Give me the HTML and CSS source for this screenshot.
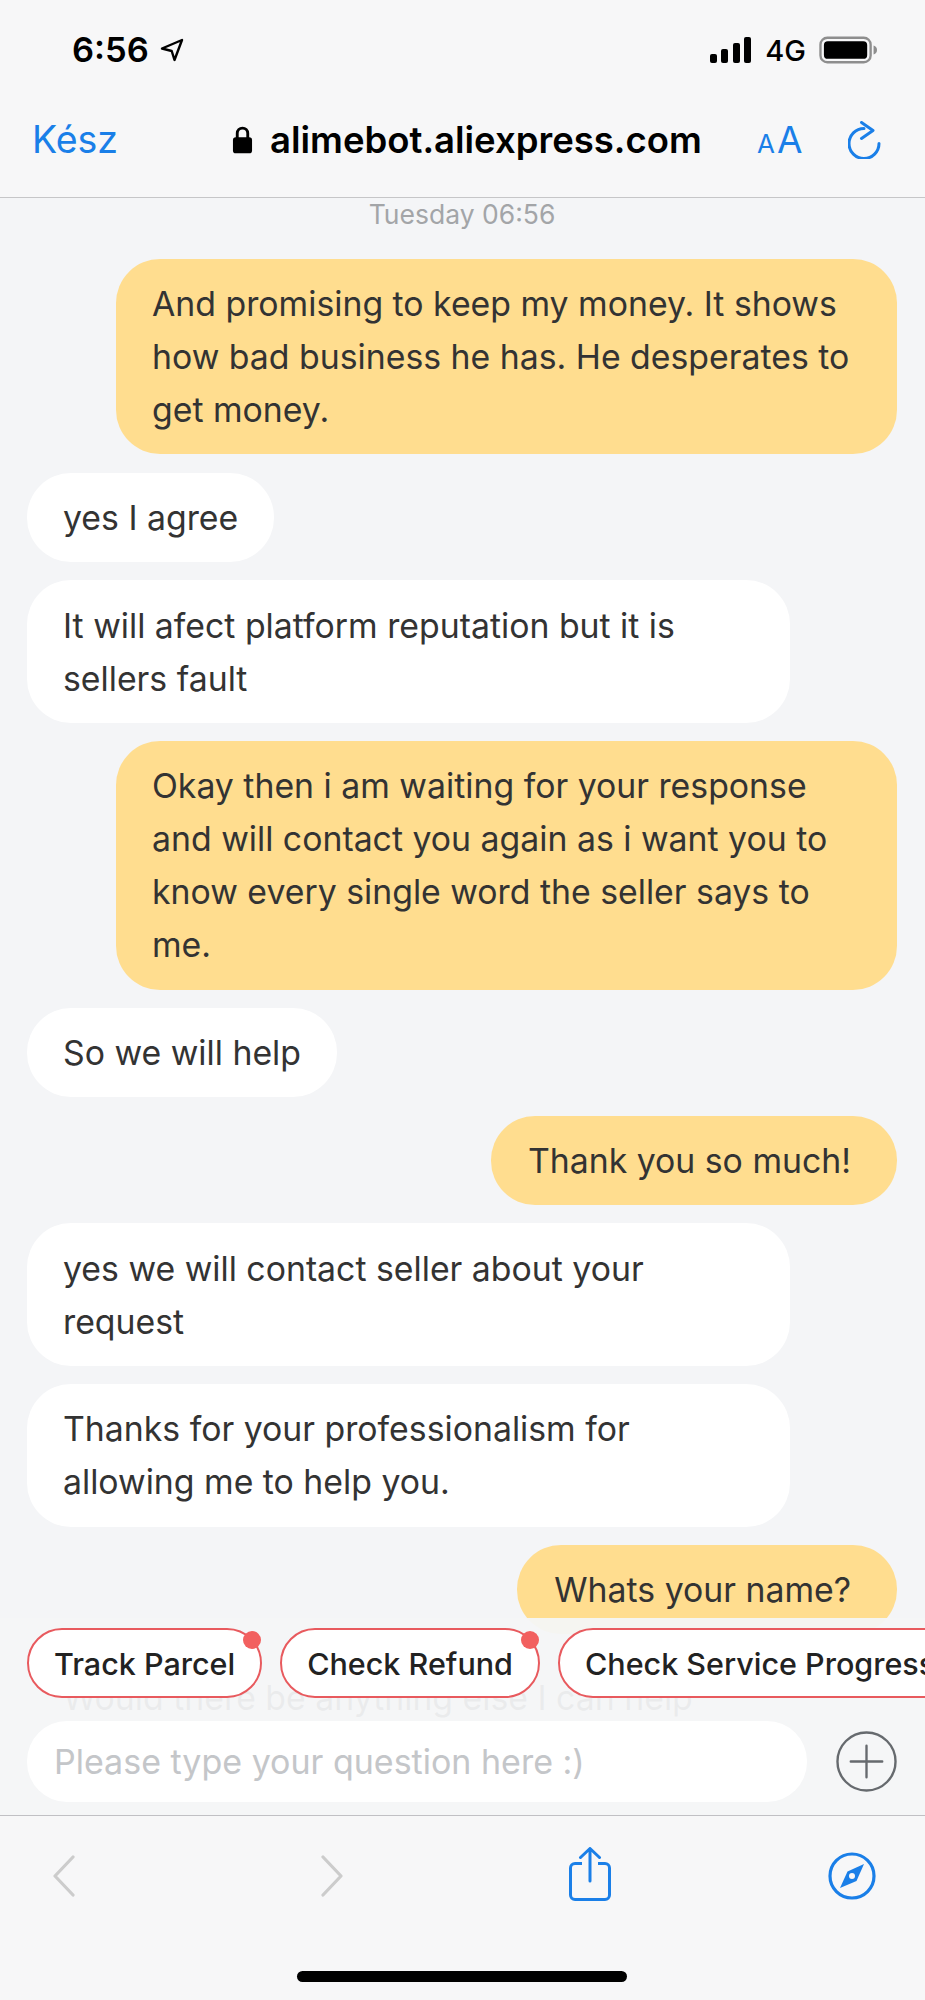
FILE: index.html
```html
<!DOCTYPE html>
<html lang="en">
<head>
    <meta charset="UTF-8">
    <meta name="viewport" content="width=device-width, initial-scale=1.0">
    <title>alimebot.aliexpress.com</title>
    <link rel="stylesheet" href="styles.css">
</head>

<body>
    <div class="phone">
        <div class="status-bar">
            <div class="status-time">
                <span>6:56</span>
                <svg class="icon-location" viewBox="0 0 24 24"><path d="M2 10.500 22 2l-7.500 20-2.800-9z" fill="none" stroke="#000" stroke-width="2.400" stroke-linejoin="round"/></svg>
            </div>
            <div class="status-right">
                <svg class="icon-signal" viewBox="0 0 42 26"><rect x="0" y="17" width="7" height="9" rx="2"/><rect x="11" y="12" width="7" height="14" rx="2"/><rect x="23" y="6" width="7" height="20" rx="2"/><rect x="34" y="0" width="7" height="26" rx="2"/></svg>
                <span class="status-net">4G</span>
                <svg class="icon-battery" viewBox="0 0 60 28"><rect x="1.500" y="1.500" width="51" height="25" rx="7" fill="none" stroke="#8e8e8e" stroke-width="2.400"/><rect x="5" y="5" width="44" height="18" rx="4"/><path d="M55.500 9.500c2.500.8 3.500 2.500 3.500 4.500s-1 3.700-3.500 4.500z" fill="#8e8e8e"/></svg>
            </div>
        </div>

        <div class="nav-bar">
            <a href="#" class="nav-done">Kész</a>
            <div class="nav-url">
                <svg class="icon-lock" viewBox="0 0 22 30"><path d="M5.500 13V8a5.500 5.500 0 0 1 11 0v5" fill="none" stroke="#000" stroke-width="3"/><rect x="1" y="12" width="20" height="17" rx="3"/></svg>
                <span>alimebot.aliexpress.com</span>
            </div>
            <div class="nav-aa"><span class="aa-small">A</span><span class="aa-big">A</span></div>
            <svg class="icon-reload" viewBox="0 0 33 38"><path d="M16 7.500A15 15 0 1 0 31 22.500" fill="none" stroke="#1a7fe8" stroke-width="3" stroke-linecap="round"/><path d="M13.500 1.500 25 9.500 13.500 17.500" fill="none" stroke="#1a7fe8" stroke-width="3" stroke-linecap="round" stroke-linejoin="round"/></svg>
        </div>

        <div class="chat-area">
            <div class="chat-scroll">
                <div class="chat-time">Tuesday 06:56</div>
                <div class="bubble me long">And promising to keep my money. It shows how bad business he has. He desperates to get money.</div>
                <div class="bubble bot">yes I agree</div>
                <div class="bubble bot wide">It will afect platform reputation but it is sellers fault</div>
                <div class="bubble me long">Okay then i am waiting for your response and will contact you again as i want you to know every single word the seller says to me.</div>
                <div class="bubble bot">So we will help</div>
                <div class="bubble me">Thank you so much!</div>
                <div class="bubble bot wide">yes we will contact seller about your request</div>
                <div class="bubble bot wide">Thanks for your professionalism for allowing me to help you.</div>
                <div class="bubble me">Whats your name?</div>
                <div class="bubble bot wide">Would there be anything else I can help</div>
            </div>

            <div class="chat-footer">
                <div class="chips">
                    <div class="chip dot">Track Parcel</div>
                    <div class="chip dot">Check Refund</div>
                    <div class="chip">Check Service Progress</div>
                </div>
                <div class="input-row">
                    <div class="chat-input">Please type your question here :)</div>
                    <svg class="icon-plus" viewBox="0 0 62 62"><circle cx="31" cy="31" r="29.500" fill="none" stroke="#666a6e" stroke-width="2.400"/><path d="M31 15v32M15 31h32" stroke="#666a6e" stroke-width="2.400" stroke-linecap="round"/></svg>
                </div>
            </div>
        </div>

        <div class="tool-bar">
            <div class="tool-row">
                <svg class="tool-arrow" viewBox="0 0 24 42"><path d="M21 2 3 21l18 19" fill="none" stroke="#cccccc" stroke-width="3.200" stroke-linecap="round" stroke-linejoin="round"/></svg>
                <svg class="tool-arrow" viewBox="0 0 24 42"><path d="m3 2 18 19L3 40" fill="none" stroke="#cccccc" stroke-width="3.200" stroke-linecap="round" stroke-linejoin="round"/></svg>
                <svg class="tool-share" viewBox="0 0 42 54"><path d="M13 16.500H6A4.500 4.500 0 0 0 1.500 21v27A4.500 4.500 0 0 0 6 52.500h30a4.500 4.500 0 0 0 4.500-4.500V21A4.500 4.500 0 0 0 36 16.500h-7" fill="none" stroke="#1a7fe8" stroke-width="3"/><path d="M21 34V2M11.500 10.500 21 1.500l9.500 9" fill="none" stroke="#1a7fe8" stroke-width="3" stroke-linecap="round" stroke-linejoin="round"/></svg>
                <svg class="tool-compass" viewBox="0 0 48 48"><circle cx="24" cy="24" r="22" fill="none" stroke="#1a7fe8" stroke-width="3.200"/><path d="M36 12 28.500 29 12 36 19.500 19.500z" fill="#1a7fe8"/><circle cx="24" cy="24" r="3" fill="#f7f7f8"/></svg>
            </div>
            <div class="home-bar"></div>
        </div>
    </div>
</body>
</html>
```

FILE: styles.css
```css
html, body {
    margin: 0;
    padding: 0;
}
body {
    font-family: Inter, "Liberation Sans", Arial, sans-serif;
    background-color: #f7f7f8;
    color: #000;
}
svg {
    display: block;
    flex: none;
}
.phone {
    width: 925px;
    height: 2000px;
    display: flex;
    flex-direction: column;
    overflow: hidden;
}

/* status bar */
.status-bar {
    height: 76px;
    padding: 28px 47px 0 72px;
    box-sizing: border-box;
    display: flex;
    justify-content: space-between;
    align-items: flex-start;
    flex: none;
}
.status-time {
    display: flex;
    align-items: center;
    gap: 11px;
    font-size: 34.500px;
    font-weight: 600;
    line-height: 44px;
}
.icon-location {
    width: 24px;
    height: 24px;
}
.status-right {
    display: flex;
    align-items: center;
    gap: 13px;
    height: 44px;
}
.icon-signal {
    width: 42px;
    height: 26px;
}
.status-net {
    font-size: 29px;
    font-weight: 500;
}
.icon-battery {
    width: 59px;
    height: 28px;
}

/* address bar */
.nav-bar {
    height: 122px;
    padding: 6px 44px 0 32px;
    box-sizing: border-box;
    display: flex;
    align-items: center;
    border-bottom: 1px solid #c6c6c8;
    flex: none;
}
.nav-done {
    font-size: 37.500px;
    color: #1a7fe8;
    text-decoration: none;
    width: 200px;
}
.nav-url {
    display: flex;
    align-items: center;
    gap: 17px;
    font-size: 36.500px;
    font-weight: 600;
    width: 525px;
    white-space: nowrap;
}
.icon-lock {
    width: 21px;
    height: 30px;
}
.nav-aa {
    color: #1a7fe8;
    display: flex;
    align-items: baseline;
    gap: 2px;
    width: 91px;
}
.aa-small {
    font-size: 26px;
}
.aa-big {
    font-size: 37px;
}
.icon-reload {
    width: 33px;
    height: 38px;
}

/* chat */
.chat-area {
    position: relative;
    flex: 1;
    background-color: #f4f5f7;
    overflow: hidden;
}
.chat-scroll {
    display: flex;
    flex-direction: column;
    gap: 18.250px;
    padding: 0 28px 0 27px;
}
.chat-time {
    font-size: 26.500px;
    line-height: 32px;
    color: #a3a5a8;
    text-align: center;
    margin-bottom: 10.500px;
}
.bubble {
    font-size: 33.800px;
    line-height: 53px;
    color: #333;
    padding: 18.250px 36px;
    border-radius: 44px;
    box-sizing: border-box;
    width: fit-content;
}
.bubble.me {
    background-color: #ffdd8f;
    align-self: flex-end;
    padding-left: 37px;
    padding-right: 46px;
}
.bubble.me.long {
    width: 781px;
    padding-left: 36px;
    padding-right: 36px;
}
.bubble.bot {
    background-color: #fff;
    align-self: flex-start;
    max-width: 763px;
}
.bubble.wide {
    width: 763px;
}

/* chips and input, lies over the end of the chat */
.chat-footer {
    position: absolute;
    left: 0;
    right: 0;
    bottom: 0;
    height: 197px;
    background-color: rgba(244, 245, 247, 0.95);
    padding: 10px 0 0 27px;
    box-sizing: border-box;
    overflow: hidden;
}
.chips {
    display: flex;
    gap: 18px;
    width: 1200px;
}
.chip {
    position: relative;
    height: 70px;
    padding: 0 25px;
    display: flex;
    align-items: center;
    font-size: 30.500px;
    font-weight: 500;
    color: #222;
    background-color: #fff;
    border: 2.500px solid #e85a5e;
    border-radius: 35px;
    box-sizing: border-box;
    white-space: nowrap;
}
.chip.dot::after {
    content: "";
    position: absolute;
    top: 1px;
    right: -1px;
    width: 18px;
    height: 18px;
    border-radius: 50%;
    background-color: #f2605f;
}
.input-row {
    display: flex;
    align-items: center;
    margin-top: 23px;
}
.chat-input {
    width: 780px;
    height: 81px;
    line-height: 81px;
    padding-left: 27px;
    box-sizing: border-box;
    font-size: 34px;
    color: #c4c6c9;
    background-color: #fff;
    border-radius: 40px;
}
.icon-plus {
    width: 61px;
    height: 61px;
    margin-left: 29px;
}

/* safari toolbar */
.tool-bar {
    height: 185px;
    border-top: 1px solid #c0c0c4;
    box-sizing: border-box;
    flex: none;
    position: relative;
}
.tool-row {
    display: flex;
    align-items: center;
    height: 120px;
    padding: 0 49px 0 52px;
    box-sizing: border-box;
}
.tool-arrow {
    width: 24px;
    height: 42px;
    margin-right: 244px;
}
.tool-share {
    width: 42px;
    height: 54px;
    margin-left: -19px;
    margin-top: -4px;
}
.tool-compass {
    width: 48px;
    height: 48px;
    margin-left: auto;
}
.home-bar {
    position: absolute;
    left: 297px;
    bottom: 18px;
    width: 330px;
    height: 11px;
    border-radius: 6px;
    background-color: #000;
}
```
